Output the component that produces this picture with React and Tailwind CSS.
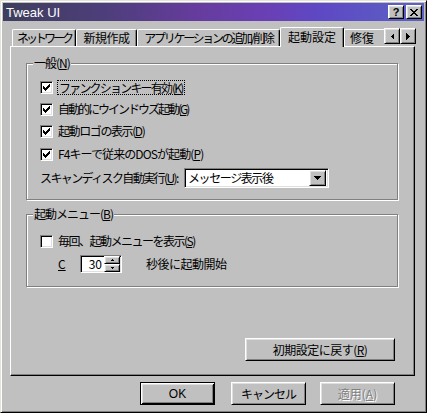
const raised =
  "border border-t-white border-l-white border-r-black border-b-black shadow-[inset_1px_1px_#dfdfdf,inset_-1px_-1px_#808080]"
const sunken =
  "border border-t-[#808080] border-l-[#808080] border-r-white border-b-white shadow-[inset_1px_1px_#000,inset_-1px_-1px_#dfdfdf]"

function Check({ checked }) {
  return (
    <div className={`w-[13px] h-[13px] shrink-0 bg-white flex items-center justify-center ${sunken}`}>
      {checked && (
        <svg width="7" height="7" viewBox="0 0 7 7" shapeRendering="crispEdges">
          <rect x="0" y="2" width="1" height="3" fill="#000" />
          <rect x="1" y="3" width="1" height="3" fill="#000" />
          <rect x="2" y="4" width="1" height="3" fill="#000" />
          <rect x="3" y="3" width="1" height="3" fill="#000" />
          <rect x="4" y="2" width="1" height="3" fill="#000" />
          <rect x="5" y="1" width="1" height="3" fill="#000" />
          <rect x="6" y="0" width="1" height="3" fill="#000" />
        </svg>
      )}
    </div>
  )
}

function Group({ label, className, children }) {
  return (
    <div className={`relative border border-[#808080] shadow-[1px_1px_#fff,inset_1px_1px_#fff] ${className}`}>
      <span className="absolute left-[6px] top-[-8px] px-[1px] bg-[#c0c0c0] leading-[14px] tracking-[-1px]">{label}</span>
      {children}
    </div>
  )
}

function Tab({ w, children }) {
  return (
    <div
      className={`h-[17px] ${w} shrink-0 border-t border-l border-white border-r border-r-black shadow-[inset_-1px_0_#808080] rounded-tl-[2px] rounded-tr-[2px] flex items-center justify-center whitespace-nowrap overflow-hidden leading-[14px]`}
    >
      {children}
    </div>
  )
}

function Button({ className, children, disabled }) {
  return (
    <div
      className={`h-[23px] flex items-center justify-center leading-[14px] ${raised} ${className} ${
        disabled ? "text-[#808080] [text-shadow:1px_1px_0_#fff]" : ""
      }`}
    >
      {children}
    </div>
  )
}

export default function App() {
  return (
    <div className="w-[427px] h-[413px] bg-[#c0c0c0] border border-t-[#e4e4d8] border-l-[#e4e4d8] border-r-black border-b-black shadow-[inset_1px_1px_#fff,inset_-1px_-1px_#808080] p-[2px] flex flex-col text-[12px] text-black font-['Noto_Sans_CJK_JP','Liberation_Sans',sans-serif] overflow-hidden">
      {/* Title bar */}
      <div className="h-[18px] shrink-0 flex items-center pl-[3px] pr-[2px] bg-[linear-gradient(90deg,#3e3e5c_0%,#4e3e7c_25%,#653c9c_45%,#6a3fb4_62%,#5e48c4_75%,#5c62c4_100%)]">
        <span className="text-white text-[13px] font-['Liberation_Sans',sans-serif] leading-none">Tweak UI</span>
        <div className="ml-auto flex gap-[2px]">
          <div className={`w-[16px] h-[14px] bg-[#c0c0c0] flex items-center justify-center ${raised}`}>
            <span className="font-['Liberation_Sans',sans-serif] font-bold text-[11px] leading-none">?</span>
          </div>
          <div className={`w-[16px] h-[14px] bg-[#c0c0c0] flex items-center justify-center ${raised}`}>
            <svg width="8" height="7" viewBox="0 0 8 7" shapeRendering="crispEdges">
              <path d="M0 0h2v1h-2zM6 0h2v1h-2zM1 1h2v1h-2zM5 1h2v1h-2zM2 2h4v1h-4zM3 3h2v1h-2zM2 4h4v1h-4zM1 5h2v1h-2zM5 5h2v1h-2zM0 6h2v1h-2zM6 6h2v1h-2z" fill="#000" />
            </svg>
          </div>
        </div>
      </div>

      {/* Tabs */}
      <div className="relative z-10 mt-[6px] h-[19px] shrink-0 flex items-end pl-[9px]">
        <Tab w="w-[64px]"><span className="tracking-[-3px]">ネットワーク</span></Tab>
        <Tab w="w-[61px]"><span className="tracking-[-0.5px]">新規作成</span></Tab>
        <Tab w="w-[143px]"><span className="tracking-[-2.3px]">アプリケーションの追加/削除</span></Tab>
        <div className="h-[20px] w-[64px] shrink-0 -mb-[1px] bg-[#c0c0c0] border-t border-l border-white border-r border-r-black shadow-[inset_-1px_0_#808080] rounded-tl-[2px] rounded-tr-[2px] flex items-start justify-center pt-[2px] leading-[14px]">
          起動設定
        </div>
        <div className="h-[17px] w-[40px] shrink-0 border-t border-l border-white flex items-center pl-[5px] leading-[14px] overflow-hidden">
          修復
        </div>
        <div className="flex mb-[2px]">
          <div className={`w-[16px] h-[16px] bg-[#c0c0c0] flex items-center justify-center ${raised}`}>
            <svg width="4" height="7" viewBox="0 0 4 7" shapeRendering="crispEdges">
              <path d="M4 0L0.5 3.5L4 7z" fill="#000" />
            </svg>
          </div>
          <div className={`w-[16px] h-[16px] bg-[#c0c0c0] flex items-center justify-center ${raised}`}>
            <svg width="4" height="7" viewBox="0 0 4 7" shapeRendering="crispEdges">
              <path d="M0 0L3.5 3.5L0 7z" fill="#000" />
            </svg>
          </div>
        </div>
      </div>

      {/* Panel */}
      <div className="ml-[7px] w-[405px] h-[330px] shrink-0 border border-t-white border-l-white border-r-black border-b-black shadow-[inset_-1px_-1px_#808080] pl-[15px] pt-[16px] flex flex-col">
        <Group label={<>一般(<u>N</u>)</>} className="w-[372px] h-[137px] pl-[13px] pt-[12px]">
          <div className="h-[22px] flex items-center">
            <Check checked />
            <span className="ml-[4px] border border-dotted border-black px-[1px] leading-[13px] tracking-[-1.8px] whitespace-nowrap">
              ファンクションキー有効 (<u>K</u>)
            </span>
          </div>
          <div className="h-[22px] flex items-center">
            <Check checked />
            <span className="ml-[5px] leading-[14px] tracking-[-2px] whitespace-nowrap">自動的にウインドウズ起動(<u>G</u>)</span>
          </div>
          <div className="h-[22px] flex items-center">
            <Check checked />
            <span className="ml-[5px] leading-[14px] tracking-[-1.4px] whitespace-nowrap">起動ロゴの表示(<u>D</u>)</span>
          </div>
          <div className="h-[24px] flex items-center">
            <Check checked />
            <span className="ml-[5px] leading-[14px] tracking-[-0.9px] whitespace-nowrap">F4キーで従来のDOSが起動(<u>P</u>)</span>
          </div>
          <div className="h-[24px] flex items-center">
            <span className="w-[144px] leading-[14px] tracking-[-1.6px] whitespace-nowrap">スキャンディスク自動実行(<u>U</u>):</span>
            <div className={`w-[145px] h-[20px] bg-white flex items-center pl-[3px] pr-[2px] ${sunken}`}>
              <span className="leading-[14px] tracking-[-1.4px] whitespace-nowrap">メッセージ表示後</span>
              <div className={`ml-auto w-[17px] h-[16px] bg-[#c0c0c0] flex items-center justify-center ${raised}`}>
                <svg width="7" height="4" viewBox="0 0 7 4" shapeRendering="crispEdges">
                  <path d="M0 0h7v1h-7zM1 1h5v1h-5zM2 2h3v1h-3zM3 3h1v1h-1z" fill="#000" />
                </svg>
              </div>
            </div>
          </div>
        </Group>

        <Group label={<>起動メニュー(<u>B</u>)</>} className="mt-[14px] w-[372px] h-[73px] pl-[13px] pt-[15px]">
          <div className="h-[22px] flex items-center">
            <Check />
            <span className="ml-[5px] leading-[14px] tracking-[-1.5px] whitespace-nowrap">毎回、起動メニューを表示(<u>S</u>)</span>
          </div>
          <div className="mt-[1px] h-[22px] flex items-center">
            <span className="ml-[18px] w-[22px] leading-[14px]"><u>C</u></span>
            <div className={`w-[42px] h-[18px] bg-white flex items-center ${sunken}`}>
              <span className="flex-1 text-right pr-[2px] leading-[14px]">30</span>
              <div className="w-[16px] h-[16px] mr-[1px] flex flex-col">
                <div className={`h-[8px] bg-[#c0c0c0] flex items-center justify-center ${raised}`}>
                  <svg width="5" height="3" viewBox="0 0 5 3" shapeRendering="crispEdges">
                    <path d="M2 0h1v1h-1zM1 1h3v1h-3z" fill="#000" />
                  </svg>
                </div>
                <div className={`h-[8px] bg-[#c0c0c0] flex items-center justify-center ${raised}`}>
                  <svg width="5" height="3" viewBox="0 0 5 3" shapeRendering="crispEdges">
                    <path d="M1 0h3v1h-3zM2 1h1v1h-1z" fill="#000" />
                  </svg>
                </div>
              </div>
            </div>
            <span className="ml-[24px] leading-[14px] tracking-[-0.5px]">秒後に起動開始</span>
          </div>
        </Group>

        <Button className="mt-[51px] ml-[219px] w-[150px]">
          <span className="tracking-[-0.5px]">初期設定に戻す(<u>R</u>)</span>
        </Button>
      </div>

      {/* Bottom buttons */}
      <div className="mt-[6px] flex ml-[137px]">
        <div className="w-[75px] h-[23px] flex items-center justify-center leading-[14px] border border-black shadow-[inset_1px_1px_#fff,inset_-1px_-1px_#000,inset_2px_2px_#dfdfdf,inset_-2px_-2px_#808080] font-['Liberation_Sans',sans-serif]">
          OK
        </div>
        <Button className="ml-[16px] w-[75px]"><span className="tracking-[-1px]">キャンセル</span></Button>
        <Button className="ml-[14px] w-[75px]" disabled>適用(<u>A</u>)</Button>
      </div>
    </div>
  )
}
